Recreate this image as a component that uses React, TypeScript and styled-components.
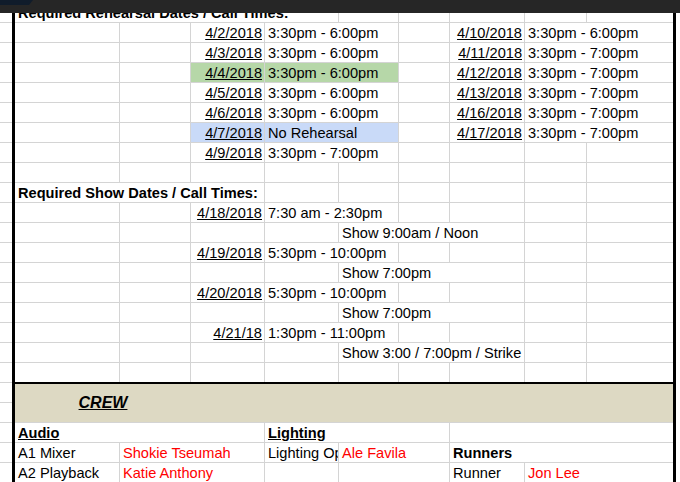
import styled, { createGlobalStyle } from "styled-components";

const GRID = "#d4d4d4";
const GREEN = "#b6d7a8";
const BLUE = "#c9daf8";

const GlobalStyle = createGlobalStyle`
	html, body {
		margin: 0;
		padding: 0;
		background: #ffffff;
	}
	body {
		font-family: "Liberation Sans", Arial, sans-serif;
		color: #000000;
	}
`;

const Page = styled.div`
	width: 680px;
	height: 482px;
	overflow: hidden;
	display: flex;
	flex-direction: column;
`;

const TopBar = styled.div`
	height: 13px;
	flex-shrink: 0;
	background: #262626;
	display: flex;
	align-items: flex-start;
`;

const Body = styled.div`
	flex: 1;
	display: flex;
`;

const Margin = styled.div<{ $w: number; $lines?: boolean }>`
	width: ${(p) => p.$w}px;
	flex-shrink: 0;
	background: ${(p) =>
		p.$lines
			? `repeating-linear-gradient(to bottom, transparent 0 9px, ${GRID} 9px 10px, transparent 10px 20px)`
			: "#ffffff"};
`;

const Sheet = styled.div`
	width: 658px;
	flex-shrink: 0;
	border-left: 3px solid #000;
	border-right: 3px solid #000;
	display: flex;
	flex-direction: column;
`;

const COLS = "105px 71px 74px 74px 60px 51px 75px 62px 86px";

const ClipRow = styled.div`
	height: 10px;
	overflow: hidden;
`;

const Row = styled.div<{ $shift?: boolean }>`
	display: grid;
	grid-template-columns: ${COLS};
	height: 20px;
	margin-top: ${(p) => (p.$shift ? "-10px" : "0")};
`;

const Cell = styled.div<{
	$span: number;
	$right?: boolean;
	$u?: boolean;
	$b?: boolean;
	$red?: boolean;
	$bg?: string;
	$end?: boolean;
}>`
	grid-column: span ${(p) => p.$span};
	box-sizing: border-box;
	height: 20px;
	border-bottom: 1px solid ${GRID};
	border-right: ${(p) => (p.$end ? "none" : `1px solid ${GRID}`)};
	background: ${(p) => p.$bg || "transparent"};
	padding: ${(p) => (p.$right ? "1px 2px 0 3px" : "1px 3px 0")};
	text-align: ${(p) => (p.$right ? "right" : "left")};
	font-size: 14.6px;
	line-height: 18px;
	font-weight: ${(p) => (p.$b ? 700 : 400)};
	text-decoration: ${(p) => (p.$u ? "underline" : "none")};
	color: ${(p) => (p.$red ? "#ff0000" : "#000000")};
	white-space: nowrap;
	overflow: hidden;
`;

const Band = styled.div`
	display: grid;
	grid-template-columns: ${COLS};
	align-items: center;
	box-sizing: border-box;
	height: 41px;
	margin-top: -1px;
	border-top: 2px solid #000;
	border-bottom: 1px solid ${GRID};
	background: #ddd9c3;
`;

const BandTitle = styled.div`
	grid-column: span 2;
	text-align: center;
	font-size: 16px;
	font-weight: 700;
	font-style: italic;
	text-decoration: underline;
`;

type CellData = {
	t?: string;
	s?: number;
	r?: boolean;
	u?: boolean;
	b?: boolean;
	red?: boolean;
	bg?: string;
};

const E: CellData = {};
const blank = (s: number): CellData => ({ s });
const date = (t: string, bg?: string): CellData => ({ t, r: true, u: true, bg });
const time = (t: string, bg?: string): CellData => ({ t, s: 2, bg });
const show = (t: string): CellData => ({ t, s: 3 });
const empty: CellData[] = Array(9).fill(E);

const headRow: CellData[] = [
	{ t: "Required Rehearsal Dates / Call Times:", s: 4, b: true },
	E,
	E,
	E,
	E,
	E,
];

const scheduleRows: CellData[][] = [
	[E, E, date("4/2/2018"), time("3:30pm - 6:00pm"), E, date("4/10/2018"), time("3:30pm - 6:00pm")],
	[E, E, date("4/3/2018"), time("3:30pm - 6:00pm"), E, date("4/11/2018"), time("3:30pm - 7:00pm")],
	[E, E, date("4/4/2018", GREEN), time("3:30pm - 6:00pm", GREEN), E, date("4/12/2018"), time("3:30pm - 7:00pm")],
	[E, E, date("4/5/2018"), time("3:30pm - 6:00pm"), E, date("4/13/2018"), time("3:30pm - 7:00pm")],
	[E, E, date("4/6/2018"), time("3:30pm - 6:00pm"), E, date("4/16/2018"), time("3:30pm - 7:00pm")],
	[E, E, date("4/7/2018", BLUE), time("No Rehearsal", BLUE), E, date("4/17/2018"), time("3:30pm - 7:00pm")],
	[E, E, date("4/9/2018"), time("3:30pm - 7:00pm"), E, E, E, E],
	empty,
	[{ t: "Required Show Dates / Call Times:", s: 3, b: true }, E, E, E, E, E, E],
	[E, E, date("4/18/2018"), time("7:30 am - 2:30pm"), E, E, E, E],
	[E, E, E, E, show("Show 9:00am / Noon"), E, E],
	[E, E, date("4/19/2018"), time("5:30pm - 10:00pm"), E, E, E, E],
	[E, E, E, E, show("Show 7:00pm"), E, E],
	[E, E, date("4/20/2018"), time("5:30pm - 10:00pm"), E, E, E, E],
	[E, E, E, E, show("Show 7:00pm"), E, E],
	[E, E, date("4/21/18"), time("1:30pm - 11:00pm"), E, E, E, E],
	[E, E, E, E, show("Show 3:00 / 7:00pm / Strike"), E, E],
	empty,
];

const crewRows: CellData[][] = [
	[{ t: "Audio", s: 3, b: true, u: true }, { t: "Lighting", s: 3, b: true, u: true }, blank(3)],
	[
		{ t: "A1 Mixer" },
		{ t: "Shokie Tseumah", s: 2, red: true },
		{ t: "Lighting Op" },
		{ t: "Ale Favila", s: 2, red: true },
		{ t: "Runners", s: 3, b: true },
	],
	[
		{ t: "A2 Playback" },
		{ t: "Katie Anthony", s: 2, red: true },
		E,
		blank(2),
		{ t: "Runner" },
		{ t: "Jon Lee", s: 2, red: true },
	],
];

const SheetRow = ({ cells, shift }: { cells: CellData[]; shift?: boolean }) => {
	let col = 0;
	return (
		<Row $shift={shift}>
			{cells.map((c, i) => {
				const span = c.s || 1;
				col += span;
				return (
					<Cell
						key={i}
						$span={span}
						$right={c.r}
						$u={c.u}
						$b={c.b}
						$red={c.red}
						$bg={c.bg}
						$end={col === 9}>
						{c.t}
					</Cell>
				);
			})}
		</Row>
	);
};

const App = () => {
	return (
		<>
			<GlobalStyle />
			<Page>
				<TopBar>
					<svg width="33" height="5" viewBox="0 0 33 5">
						<polygon points="0,0 33,0 29,5 0,5" fill="#101c2b" />
					</svg>
				</TopBar>
				<Body>
					<Margin $w={12} $lines />
					<Sheet>
						<ClipRow>
							<SheetRow cells={headRow} shift />
						</ClipRow>
						{scheduleRows.map((r, i) => (
							<SheetRow key={i} cells={r} />
						))}
						<Band>
							<BandTitle>CREW</BandTitle>
						</Band>
						{crewRows.map((r, i) => (
							<SheetRow key={i} cells={r} />
						))}
					</Sheet>
					<Margin $w={4} />
				</Body>
			</Page>
		</>
	);
};

export default App;
